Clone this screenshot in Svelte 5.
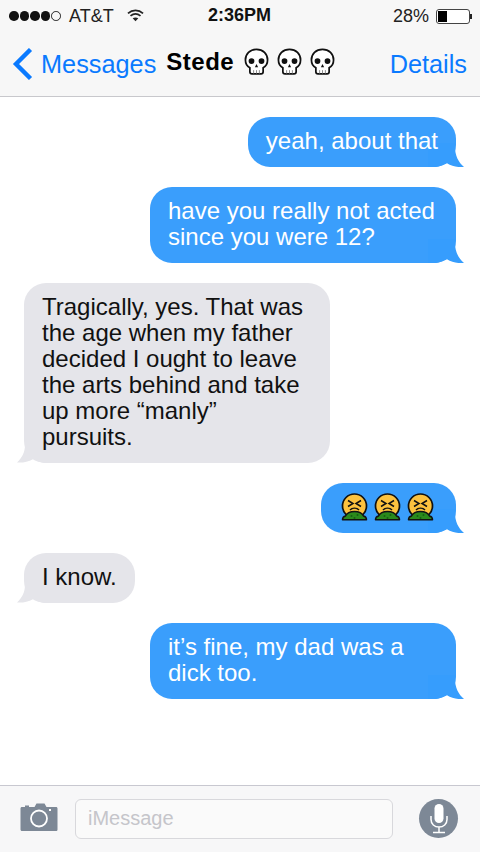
<script>
  const messages = [
    { side: 'out', lines: ['yeah, about that'] },
    { side: 'out', lines: ['have you really not acted', 'since you were 12?'] },
    { side: 'in', lines: ['Tragically, yes. That was', 'the age when my father', 'decided I ought to leave', 'the arts behind and take', 'up more “manly”', 'pursuits.'] },
    { side: 'out', emoji: 3 },
    { side: 'in', lines: ['I know.'] },
    { side: 'out', lines: ['it’s fine, my dad was a', 'dick too.'] }
  ];
</script>

{#snippet skull()}
  <svg class="skull" viewBox="0 0 26 28" width="25" height="27">
    <path d="M13 1.500C6.200 1.500 1.500 6.200 1.500 12.400c0 3.800 1.800 6.600 4.600 8.200v4c0 1.300 1 2.200 2.200 2.200h9.400c1.200 0 2.200-.9 2.200-2.200v-4c2.800-1.600 4.600-4.400 4.600-8.200C24.500 6.200 19.800 1.500 13 1.500z" fill="#fff" stroke="#111" stroke-width="1.800"/>
    <circle cx="7.800" cy="13.600" r="3" fill="#111"/>
    <circle cx="18.200" cy="13.600" r="3" fill="#111"/>
    <path d="M13 16.500l-1.700 3.500h3.400z" fill="#111"/>
    <path d="M10 23v3.500M13 23v3.500M16 23v3.500" stroke="#888" stroke-width="1"/>
  </svg>
{/snippet}

{#snippet sick()}
  <svg class="sick" viewBox="0 0 27 28" width="27" height="28">
    <circle cx="13.500" cy="13" r="12" fill="#fcc23f" stroke="#111" stroke-width="1.700"/>
    <path d="M7 7.500l5 3-5 3M20 7.500l-5 3 5 3" fill="none" stroke="#111" stroke-width="1.500"/>
    <path d="M9 17c2-2.500 7-2.500 9 0" fill="none" stroke="#111" stroke-width="1.400"/>
    <path d="M1.500 26.800c0-2 1-3.300 3-3.800 1.500-3 4.500-4.500 9-4.500s7.500 1.500 9 4.500c2 .5 3 1.800 3 3.800z" fill="#2a8a1c" stroke="#111" stroke-width="1.500" stroke-linejoin="round"/>
    <circle cx="10.500" cy="23" r="1" fill="#166012"/><circle cx="16.500" cy="22" r="1" fill="#166012"/><circle cx="13.500" cy="25" r="1" fill="#166012"/>
  </svg>
{/snippet}

<div class="screen">
  <header class="top">
    <div class="status">
      <div class="status-left">
        <span class="dots">
          <i class="dot"></i><i class="dot"></i><i class="dot"></i><i class="dot"></i><i class="dot empty"></i>
        </span>
        <span class="carrier">AT&amp;T</span>
        <svg class="wifi" viewBox="0 0 18 14" width="17" height="14">
          <path d="M1 5.200C5.700 1 12.300 1 17 5.200M3.700 8C7 5.200 11 5.200 14.300 8" fill="none" stroke="#222" stroke-width="1.800"/>
          <path d="M6 10.500c1.800-1.300 4.200-1.300 6 0L9 13.500z" fill="#222"/>
        </svg>
      </div>
      <div class="clock">2:36PM</div>
      <div class="status-right">
        <span>28%</span>
        <span class="battery"><i class="charge"></i></span>
        <i class="nub"></i>
      </div>
    </div>
    <nav class="nav">
      <div class="nav-left">
        <svg class="chev" viewBox="0 0 22 32" width="22" height="32">
          <path d="M18.500 1.500L4 16l14.500 14.500" fill="none" stroke="#0a7aff" stroke-width="4.400"/>
        </svg>
        <span class="link">Messages</span>
      </div>
      <div class="title">
        <strong>Stede</strong>
        <span class="skulls">{@render skull()}{@render skull()}{@render skull()}</span>
      </div>
      <span class="link details">Details</span>
    </nav>
  </header>

  <main class="thread">
    {#each messages as m}
      <div class="row {m.side}">
        <div class="bubble {m.side}" class:wide={m.lines && m.lines.length > 1}>
          {#if m.side === 'out'}
            <svg class="tail tail-out" viewBox="0 0 36 24" width="36" height="24">
              <path d="M27 0v4c0 8 3 15 9 20-6 .5-12-.5-17-3.800-2.500 1.300-6 2.800-11 3.800H0V0z" fill="#369dfd"/>
            </svg>
          {:else}
            <svg class="tail tail-in" viewBox="0 0 30 24" width="30" height="24">
              <path d="M9 0v6c0 7-3 13-8 17.500 5 .5 11-.5 16-3.300 2.500 1.800 6 2.800 13 3.800V0z" fill="#e5e5ea"/>
            </svg>
          {/if}
          <div class="content">
            {#if m.emoji}
              <div class="emojis">
                {#each Array(m.emoji) as _}{@render sick()}{/each}
              </div>
            {:else}
              {#each m.lines as l}<div>{l}</div>{/each}
            {/if}
          </div>
        </div>
      </div>
    {/each}
  </main>

  <footer class="composer">
    <svg class="camera" viewBox="0 0 38 30" width="38" height="30">
      <path d="M2 5h3V3.500h4V5h5.500l2-3.500h8l2 3.500H36c1 0 1.500.6 1.500 1.500v21c0 1-.6 1.500-1.500 1.500H2c-1 0-1.500-.6-1.500-1.500v-21C.5 5.600 1 5 2 5z" fill="#7d8896"/>
      <circle cx="19" cy="16.500" r="8" fill="none" stroke="#fff" stroke-width="1.800"/>
      <rect x="29" y="7" width="2" height="2" fill="#fff"/>
    </svg>
    <div class="field">iMessage</div>
    <div class="mic">
      <svg viewBox="0 0 24 32" width="24" height="32">
        <rect x="7.500" y="1" width="9" height="19" rx="4.500" fill="#fff"/>
        <path d="M4 13v3.500c0 4.500 3.500 7.500 8 7.500s8-3 8-7.500V13M12 24v5M6 29.500h12" fill="none" stroke="#fff" stroke-width="1.500"/>
      </svg>
    </div>
  </footer>
</div>

<style>
  :global(body) { margin: 0; background: #fff; }
  .screen {
    width: 480px;
    height: 852px;
    display: flex;
    flex-direction: column;
    overflow: hidden;
    font-family: "Liberation Sans", Arial, sans-serif;
    color: #111;
    background: #fff;
  }
  .top {
    height: 97px;
    box-sizing: border-box;
    background: #f7f7f7;
    border-bottom: 1px solid #c8c8cc;
    flex: none;
  }
  .status {
    height: 30px;
    display: flex;
    align-items: center;
    justify-content: space-between;
    position: relative;
    padding: 1px 8px 0 9px;
    font-size: 18px;
    color: #222;
  }
  .status-left, .status-right { display: flex; align-items: center; }
  .dots { display: flex; gap: 1px; }
  .dot { width: 9.600px; height: 9.600px; border-radius: 50%; background: #111; box-sizing: border-box; }
  .dot.empty { background: transparent; border: 1px solid #222; }
  .carrier { margin-left: 8px; }
  .wifi { margin-left: 13px; margin-top: -2px; }
  .clock {
    position: absolute;
    left: 208px;
    top: 5px;
    font-weight: 700;
    font-size: 18px;
    color: #111;
  }
  .battery {
    margin-left: 7px;
    width: 34px;
    height: 15px;
    box-sizing: border-box;
    border: 1.500px solid #444;
    border-radius: 3px;
    padding: 1px;
    background: #fff;
    display: block;
  }
  .charge { display: block; height: 100%; width: 9px; background: #000; }
  .nub { width: 2px; height: 5px; background: #222; }
  .nav {
    height: 66px;
    display: flex;
    align-items: center;
    padding: 0 13px 5px 12px;
    font-size: 25.300px;
  }
  .nav-left { display: flex; align-items: center; gap: 7px; }
  .link { color: #0a7aff; }
  .title { display: flex; align-items: center; margin: 0 0 5px 10px; font-size: 24px; letter-spacing: 0.500px; color: #000; }
  .skulls { display: flex; gap: 8px; margin-left: 10px; }
  .details { margin-left: auto; }

  .thread {
    flex: 1;
    display: flex;
    flex-direction: column;
    gap: 20px;
    padding: 20px 24px 0;
    font-size: 24px;
    line-height: 26px;
  }
  .row { display: flex; }
  .row.out { justify-content: flex-end; }
  .bubble {
    position: relative;
    padding: 11px 18px 13px;
    border-radius: 22px;
  }
  .bubble.wide { width: 306px; box-sizing: border-box; }
  .bubble.out { background: #3a9efc; color: #fff; }
  .bubble.in { background: #e5e5ea; color: #111; }
  .content { position: relative; }
  .tail { position: absolute; bottom: 0; display: block; }
  .tail-out { right: -8px; }
  .tail-in { left: -8px; }
  .emojis { display: flex; gap: 6px; height: 26px; margin: 0 4px 0 2px; }
  .emojis :global(svg) { flex: none; margin-top: -1px; }

  .composer {
    height: 67px;
    box-sizing: border-box;
    flex: none;
    background: #f7f7f8;
    border-top: 1px solid #c8c8d0;
    display: flex;
    align-items: center;
    padding: 0 22px 0 20px;
  }
  .camera { margin-top: -4px; flex: none; }
  .field {
    margin-left: 17px;
    width: 318px;
    height: 40px;
    box-sizing: border-box;
    background: #fafafa;
    border: 1px solid #d8d8dc;
    border-radius: 6px;
    padding-left: 12px;
    line-height: 37px;
    font-size: 20px;
    color: #c5c5ca;
    flex: none;
  }
  .mic {
    margin-left: auto;
    margin-top: -1px;
    width: 39px;
    height: 39px;
    border-radius: 50%;
    background: #7d8896;
    display: flex;
    align-items: center;
    justify-content: center;
  }
</style>
